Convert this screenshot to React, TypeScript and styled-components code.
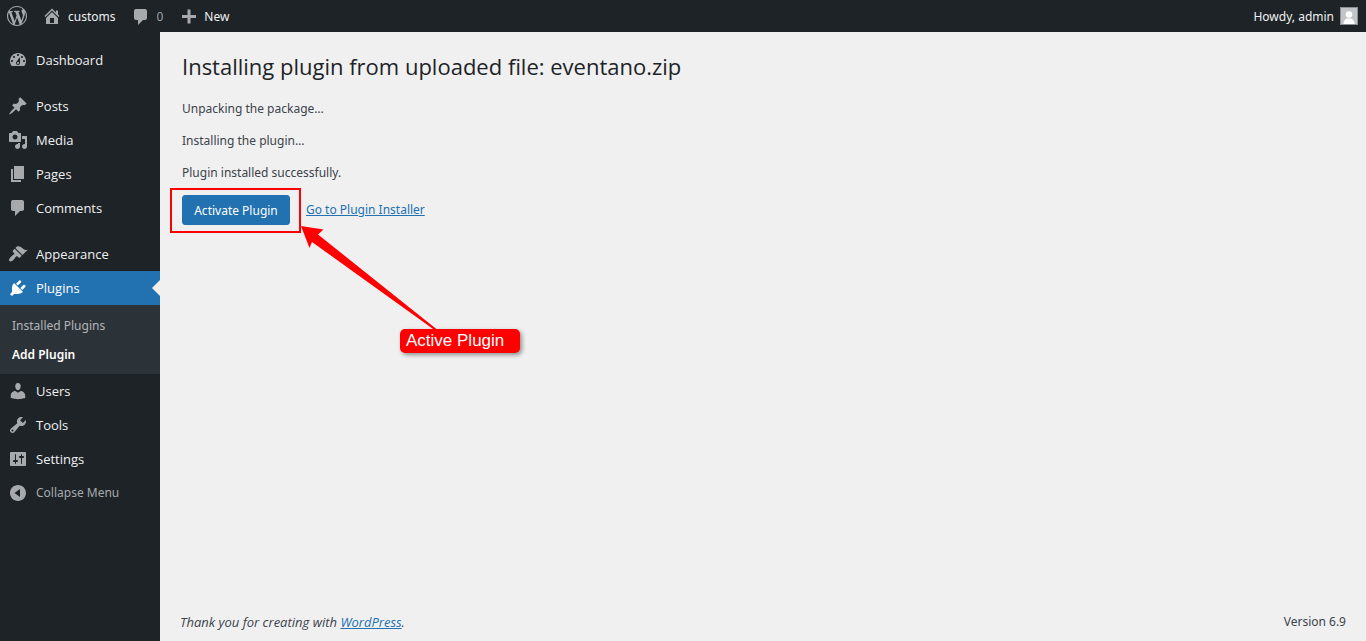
import React from "react";
import styled, { createGlobalStyle, css } from "styled-components";

const GlobalStyle = createGlobalStyle`
  * { box-sizing: border-box; }
  body {
    margin: 0;
    background: #f0f0f1;
    color: #3c434a;
    font-family: "Noto Sans", "Open Sans", sans-serif;
    font-size: 12px;
    line-height: 20px;
  }
  ul, h1, p { margin: 0; padding: 0; }
  ul { list-style: none; }
`;

const ICONS = {
  wordpress:
    "M20 10c0-5.51-4.49-10-10-10C4.48 0 0 4.49 0 10c0 5.52 4.48 10 10 10 5.51 0 10-4.48 10-10zM7.78 15.37L4.37 6.22c.55-.02 1.17-.08 1.17-.08.5-.06.44-1.13-.06-1.11 0 0-1.45.11-2.37.11-.18 0-.37 0-.58-.01C4.12 2.69 6.87 1.11 10 1.11c2.33 0 4.45.87 6.05 2.34-.68-.11-1.65.39-1.65 1.58 0 .74.45 1.36.9 2.1.35.61.55 1.36.55 2.46 0 1.49-1.4 5-1.4 5l-3.03-8.37c.54-.02.82-.17.82-.17.5-.05.44-1.25-.06-1.22 0 0-1.44.12-2.38.12-.87 0-2.33-.12-2.33-.12-.5-.03-.56 1.2-.06 1.22l.92.08 1.26 3.41zM17.41 10c.24-.64.74-1.87.43-4.25.7 1.29 1.05 2.71 1.05 4.25 0 3.29-1.73 6.24-4.4 7.78.97-2.59 1.94-5.2 2.92-7.78zM6.1 18.09C3.12 16.65 1.11 13.53 1.11 10c0-1.3.23-2.48.72-3.59C3.25 10.3 4.67 14.2 6.1 18.09zm4.03-6.63l2.58 6.98c-.86.29-1.76.45-2.71.45-.79 0-1.57-.11-2.29-.33.81-2.38 1.62-4.74 2.42-7.1z",
  home: "M16 8.5l1.53 1.53-1.06 1.06L10 4.6l-6.47 6.49-1.06-1.06L10 2.5l4 4v-2h2v4zm-6-2.46l6 5.99V18H4v-5.97zM12 17v-5H8v5h4z",
  plus: "M18 9v3h-5.5v5.5h-3V12H4V9h5.5V3.5h3V9z",
  bubble:
    "M6 3h9c1.1 0 2 .9 2 2v7c0 1.1-.9 2-2 2h-2l-5 5v-5H6c-1.1 0-2-.9-2-2V5c0-1.1.9-2 2-2z",
  dashboard:
    "M3.76 16h12.48c1.1-1.37 1.76-3.11 1.76-5 0-4.42-3.58-8-8-8s-8 3.58-8 8c0 1.89.66 3.63 1.76 5zM10 4c.55 0 1 .45 1 1s-.45 1-1 1-1-.45-1-1 .45-1 1-1zM6 6c.55 0 1 .45 1 1s-.45 1-1 1-1-.45-1-1 .45-1 1-1zm8 0c.55 0 1 .45 1 1s-.45 1-1 1-1-.45-1-1 .45-1 1-1zm-5.37 5.55L12 7v6c0 1.1-.9 2-2 2s-2-.9-2-2c0-.57.24-1.08.63-1.45zM4 10c.55 0 1 .45 1 1s-.45 1-1 1-1-.45-1-1 .45-1 1-1zm12 0c.55 0 1 .45 1 1s-.45 1-1 1-1-.45-1-1 .45-1 1-1zm-5 3c0-.55-.45-1-1-1s-1 .45-1 1 .45 1 1 1 1-.45 1-1z",
  posts:
    "M10.44 3.02l1.82-1.82 6.36 6.35-1.83 1.82c-1.05-.68-2.48-.57-3.41.36l-.75.75c-.92.93-1.04 2.35-.35 3.41l-1.83 1.82-2.41-2.41-2.8 2.79c-.42.42-3.38 2.71-3.8 2.29s1.86-3.39 2.28-3.81l2.79-2.79L4.1 9.36l1.83-1.82c1.05.69 2.48.57 3.4-.36l.75-.75c.93-.92 1.05-2.35.36-3.41z",
  media:
    "M13 11V4c0-.55-.45-1-1-1h-1.67L9 1H5L3.67 3H2c-.55 0-1 .45-1 1v7c0 .55.45 1 1 1h10c.55 0 1-.45 1-1zM7 4.5c1.38 0 2.5 1.12 2.5 2.5S8.38 9.5 7 9.5 4.5 8.38 4.5 7 5.62 4.5 7 4.5zM14 6h5v10.5c0 1.38-1.12 2.5-2.5 2.5S14 17.88 14 16.5s1.12-2.5 2.5-2.5c.17 0 .34.02.5.05V9h-3V6zm-4 8.05V13h2v3.5c0 1.38-1.12 2.5-2.5 2.5S7 17.88 7 16.5 8.12 14 9.5 14c.17 0 .34.02.5.05z",
  pages: "M6 15V2h10v13H6zm-1 1h8v2H3V5h2v11z",
  comments:
    "M5 2h9c1.1 0 2 .9 2 2v7c0 1.1-.9 2-2 2h-2l-5 5v-5H5c-1.1 0-2-.9-2-2V4c0-1.1.9-2 2-2z",
  appearance:
    "M14.48 11.06L7.41 3.99l1.5-1.5c.5-.56 2.3-.47 3.51.32 1.21.8 1.43 1.28 2.91 2.1 1.18.64 2.45 1.26 4.45.85zm-.71.71L6.7 4.7 4.93 6.47c-.39.39-.39 1.02 0 1.41l1.06 1.06c.39.39.39 1.03 0 1.42-.6.6-1.43 1.11-2.21 1.69-.35.26-.7.53-1.01.84C1.43 14.23.4 16.08 1.4 17.07c.99 1 2.84-.03 4.18-1.36.31-.31.58-.66.85-1.02.57-.78 1.08-1.61 1.69-2.21.39-.39 1.02-.39 1.41 0l1.06 1.06c.39.39 1.02.39 1.41 0z",
  plugins:
    "M13.11 4.36L9.87 7.6 8 5.73l3.24-3.24c.35-.34 1.05-.2 1.56.32.52.51.66 1.21.31 1.55zm-8 1.77l.91-1.12 9.01 9.01-1.19.84c-.71.71-2.63 1.16-3.82 1.16H6.14L4.9 17.26c-.59.59-1.54.59-2.12 0-.59-.58-.59-1.53 0-2.12l1.24-1.24v-3.88c0-1.13.4-3.19 1.09-3.89zm7.26 3.97l3.24-3.24c.34-.35 1.04-.21 1.55.31.52.51.66 1.21.31 1.55l-3.24 3.25z",
  users:
    "M10 9.25c-2.27 0-2.73-3.44-2.73-3.44C7 4.02 7.82 2 9.97 2c2.16 0 2.98 2.02 2.71 3.81 0 0-.41 3.44-2.68 3.44zm0 2.57L12.72 10c2.39 0 4.52 2.33 4.52 4.53v2.49s-3.65 1.13-7.24 1.13c-3.65 0-7.24-1.13-7.24-1.13v-2.49c0-2.25 1.94-4.48 4.47-4.48z",
  tools:
    "M16.68 9.77c-1.34 1.34-3.3 1.67-4.95.99l-5.41 6.52c-.99.99-2.59.99-3.58 0s-.99-2.59 0-3.57l6.52-5.42c-.68-1.65-.35-3.61.99-4.95 1.28-1.28 3.12-1.62 4.72-1.06l-2.89 2.89 2.82 2.82 2.86-2.87c.53 1.58.18 3.39-1.08 4.65zM3.81 16.21c.4.39 1.04.39 1.43 0 .4-.4.4-1.04 0-1.43-.39-.4-1.03-.4-1.43 0-.39.39-.39 1.03 0 1.43z",
  settings:
    "M18 16V4c0-.55-.45-1-1-1H3c-.55 0-1 .45-1 1v12c0 .55.45 1 1 1h14c.55 0 1-.45 1-1zM8 11h1c.55 0 1 .45 1 1s-.45 1-1 1H8v1.5c0 .28-.22.5-.5.5s-.5-.22-.5-.5V13H6c-.55 0-1-.45-1-1s.45-1 1-1h1V5.5c0-.28.22-.5.5-.5s.5.22.5.5V11zm5-2h-1c-.55 0-1-.45-1-1s.45-1 1-1h1V5.5c0-.28.22-.5.5-.5s.5.22.5.5V7h1c.55 0 1 .45 1 1s-.45 1-1 1h-1v5.5c0 .28-.22.5-.5.5s-.5-.22-.5-.5V9z",
  collapse:
    "M10 2c4.42 0 8 3.58 8 8s-3.58 8-8 8-8-3.58-8-8 3.58-8 8-8zm2 12V6l-5.5 4z",
};

type IconName = keyof typeof ICONS;

const IconSvg = styled.svg`
  display: block;
  flex: none;
  fill: currentColor;
  fill-rule: evenodd;
`;

const Icon = ({ name }: { name: IconName }) => (
  <IconSvg width="20" height="20" viewBox="0 0 20 20" aria-hidden="true">
    <path d={ICONS[name]} />
  </IconSvg>
);

const Page = styled.div`
  display: flex;
  flex-direction: column;
  min-height: 100vh;
`;

const AdminBar = styled.header`
  display: flex;
  justify-content: space-between;
  height: 32px;
  padding: 0 8px 0 7px;
  background: #1d2327;
`;

const BarGroup = styled.nav`
  display: flex;
  gap: 15px;
`;

const BarLink = styled.a<{ $muted?: boolean }>`
  display: flex;
  align-items: center;
  gap: 6px;
  color: ${(p) => (p.$muted ? "#9ca2a7" : "#f0f0f1")};
  font-size: 12px;
  text-decoration: none;

  svg {
    color: #a7aaad;
  }
`;

const BarText = styled.span`
  padding-top: 1px;
`;

const Avatar = styled.svg`
  display: block;
  border: 1px solid #8c8f94;
  background: #c3c4c7;
`;

const Body = styled.div`
  display: flex;
  flex: 1;
`;

const Sidebar = styled.nav`
  flex: none;
  width: 160px;
  padding-top: 11px;
  background: #1d2327;
`;

const MenuGroup = styled.ul`
  & + & {
    margin-top: 12px;
  }
`;

const menuRow = css`
  display: flex;
  align-items: center;
  gap: 8px;
  width: 100%;
  height: 34px;
  padding: 0 8px;
  line-height: 18px;
`;

const MenuLink = styled.a<{ $current?: boolean }>`
  ${menuRow}
  position: relative;
  background: ${(p) => (p.$current ? "#2271b1" : "transparent")};
  color: ${(p) => (p.$current ? "#fff" : "#f0f0f1")};
  font-family: "Open Sans", "Noto Sans", sans-serif;
  font-size: 13px;
  text-decoration: none;

  svg {
    color: ${(p) => (p.$current ? "#fff" : "#a7aaad")};
  }

  ${(p) =>
    p.$current &&
    css`
      &::after {
        content: "";
        position: absolute;
        top: 9px;
        right: 0;
        border: 8px solid transparent;
        border-left-width: 0;
        border-right-color: #f0f0f1;
      }
    `}
`;

const CollapseButton = styled.button`
  ${menuRow}
  border: 0;
  background: none;
  color: #a7aaad;
  font-family: inherit;
  font-size: 12px;
  text-align: left;
`;

const Submenu = styled.ul`
  padding: 6px 0 5px;
  background: #2c3338;
`;

const SubmenuLink = styled.a<{ $current?: boolean }>`
  display: block;
  padding: 6px 12px 5px;
  color: ${(p) => (p.$current ? "#fff" : "#b3b5b8")};
  font-size: 12px;
  font-weight: ${(p) => (p.$current ? 600 : 400)};
  line-height: 18px;
  text-decoration: none;
`;

const Content = styled.div`
  display: flex;
  flex: 1;
  flex-direction: column;
  min-width: 0;
`;

const Main = styled.main`
  flex: 1;
  padding: 18px 22px;
`;

const Title = styled.h1`
  margin-bottom: 17px;
  color: #1d2327;
  font-family: "Open Sans", "Noto Sans", sans-serif;
  font-size: 22px;
  font-weight: 400;
  line-height: 32px;
`;

const Message = styled.p`
  margin-bottom: 12px;
`;

const Actions = styled.div`
  display: flex;
  align-items: center;
  gap: 16px;
`;

const Link = styled.a`
  color: #2271b1;
  text-decoration: underline;
`;

const Highlighted = styled.div`
  position: relative;
  flex: none;
`;

const HighlightFrame = styled.div`
  position: absolute;
  inset: -7px -11px -8px -12px;
  border: 2px solid #f00;
  pointer-events: none;
`;

const PrimaryButton = styled.button`
  display: block;
  min-width: 108px;
  height: 30px;
  padding: 1px 8px 0;
  border: 1px solid #2271b1;
  border-radius: 3px;
  background: #2271b1;
  color: #fff;
  font-family: inherit;
  font-size: 12px;
  line-height: 27px;
  white-space: nowrap;
`;

const Arrow = styled.svg`
  position: absolute;
  top: 30px;
  left: 118px;
  fill: #f00;
  pointer-events: none;
`;

const Callout = styled.div`
  position: absolute;
  top: 134px;
  left: 218px;
  width: 120px;
  height: 24px;
  padding: 0 6px;
  border-radius: 5px;
  background: #f00;
  box-shadow: 2px 2px 4px rgba(0, 0, 0, 0.4);
  color: #fff;
  font-family: "Liberation Sans", Arial, sans-serif;
  font-size: 17px;
  line-height: 23px;
  white-space: nowrap;
`;

const Footer = styled.footer`
  display: flex;
  justify-content: space-between;
  padding: 10px 20px 9px;
`;

const Thanks = styled.em`
  font-family: "Open Sans", "Noto Sans", sans-serif;
  font-size: 13px;
`;

type Item = { icon: IconName; label: string; current?: boolean; children?: string[] };

const MENU: Item[][] = [
  [{ icon: "dashboard", label: "Dashboard" }],
  [
    { icon: "posts", label: "Posts" },
    { icon: "media", label: "Media" },
    { icon: "pages", label: "Pages" },
    { icon: "comments", label: "Comments" },
  ],
  [
    { icon: "appearance", label: "Appearance" },
    { icon: "plugins", label: "Plugins", current: true, children: ["Installed Plugins", "Add Plugin"] },
    { icon: "users", label: "Users" },
    { icon: "tools", label: "Tools" },
    { icon: "settings", label: "Settings" },
  ],
];

export default function App() {
  return (
    <Page>
      <GlobalStyle />
      <AdminBar>
        <BarGroup aria-label="Toolbar">
          <BarLink href="#" aria-label="About WordPress">
            <Icon name="wordpress" />
          </BarLink>
          <BarLink href="#">
            <Icon name="home" />
            <BarText>customs</BarText>
          </BarLink>
          <BarLink href="#" $muted>
            <Icon name="bubble" />
            <BarText>0</BarText>
          </BarLink>
          <BarLink href="#">
            <Icon name="plus" />
            <BarText>New</BarText>
          </BarLink>
        </BarGroup>
        <BarLink href="#">
          <BarText>Howdy, admin</BarText>
          <Avatar width="18" height="18" viewBox="0 0 16 16" aria-hidden="true">
            <circle cx="8" cy="6.5" r="3.3" fill="#fff" />
            <path d="M2.5 16c0-3 1.5-4.8 3.5-5.4h4c2 .6 3.5 2.4 3.5 5.4z" fill="#fff" />
          </Avatar>
        </BarLink>
      </AdminBar>
      <Body>
        <Sidebar aria-label="Main menu">
          {MENU.map((group, i) => (
            <MenuGroup key={i}>
              {group.map((item) => (
                <li key={item.label}>
                  <MenuLink href="#" $current={item.current}>
                    <Icon name={item.icon} />
                    {item.label}
                  </MenuLink>
                  {item.children && (
                    <Submenu>
                      {item.children.map((child) => (
                        <li key={child}>
                          <SubmenuLink href="#" $current={child === "Add Plugin"}>
                            {child}
                          </SubmenuLink>
                        </li>
                      ))}
                    </Submenu>
                  )}
                </li>
              ))}
            </MenuGroup>
          ))}
          <CollapseButton type="button">
            <Icon name="collapse" />
            Collapse Menu
          </CollapseButton>
        </Sidebar>
        <Content>
          <Main>
            <Title>Installing plugin from uploaded file: eventano.zip</Title>
            <Message>Unpacking the package…</Message>
            <Message>Installing the plugin…</Message>
            <Message>Plugin installed successfully.</Message>
            <Actions>
              <Highlighted>
                <PrimaryButton type="button">Activate Plugin</PrimaryButton>
                <HighlightFrame />
                <Arrow width="140" height="106" viewBox="0 0 140 106" aria-hidden="true">
                  <path d="M1 1L23.5 4.5L18 9.5L137 104.5L134.5 105L12 17L9.5 23z" />
                </Arrow>
                <Callout>Active Plugin</Callout>
              </Highlighted>
              <Link href="#">Go to Plugin Installer</Link>
            </Actions>
          </Main>
          <Footer>
            <Thanks>
              Thank you for creating with <Link href="#">WordPress</Link>.
            </Thanks>
            <span>Version 6.9</span>
          </Footer>
        </Content>
      </Body>
    </Page>
  );
}
